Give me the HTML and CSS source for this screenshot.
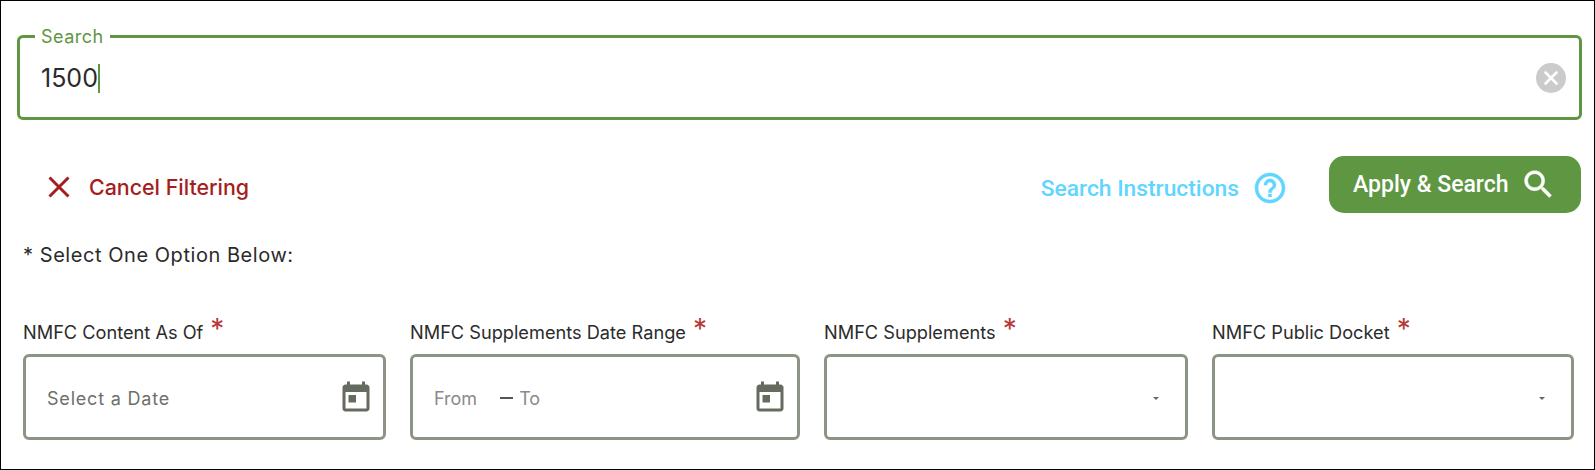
FILE: index.html
```html
<!DOCTYPE html>
<html lang="en">

<head>
    <meta charset="UTF-8">
    <meta name="viewport" content="width=device-width, initial-scale=1.0">
    <title>NMFC Search</title>
    <link rel="stylesheet" href="styles.css">
</head>

<body>
    <div class="frame">
        <fieldset class="search-box">
            <legend>Search</legend>
            <div class="search-value"><span>1500</span><span class="caret"></span></div>
            <button class="clear-btn" aria-label="Clear">
                <svg viewBox="0 0 30 30" width="30" height="30">
                    <circle cx="15" cy="15" r="15" fill="#cbcbcb" />
                    <path d="M9.5 9.5l11 11M20.5 9.5l-11 11" stroke="#fff" stroke-width="2.6" stroke-linecap="round" />
                </svg>
            </button>
        </fieldset>

        <div class="actions">
            <a class="cancel" href="#">
                <svg viewBox="0 0 22 22" width="22" height="22">
                    <path d="M1.5 1.5l19 19M20.5 1.5l-19 19" stroke="#a51d1d" stroke-width="3" />
                </svg>
                <span>Cancel Filtering</span>
            </a>
            <a class="instructions" href="#">
                <span>Search Instructions</span>
                <svg viewBox="0 0 24 24" width="36" height="36">
                    <path fill="#5fd5ff" stroke="#5fd5ff" stroke-width="0.35" d="M11 18h2v-2h-2v2zm1-16C6.48 2 2 6.48 2 12s4.48 10 10 10 10-4.48 10-10S17.52 2 12 2zm0 18c-4.41 0-8-3.59-8-8s3.59-8 8-8 8 3.59 8 8-3.59 8-8 8zm0-14c-2.21 0-4 1.79-4 4h2c0-1.1.9-2 2-2s2 .9 2 2c0 2-3 1.75-3 5h2c0-2.25 3-2.5 3-5 0-2.21-1.79-4-4-4z" />
                </svg>
            </a>
            <button class="apply">
                <span>Apply &amp; Search</span>
                <svg viewBox="0 0 24 24" width="37" height="37">
                    <path fill="#fff" stroke="#fff" stroke-width="0.3" d="M15.5 14h-.79l-.28-.27C15.41 12.59 16 11.11 16 9.5 16 5.91 13.09 3 9.5 3S3 5.91 3 9.5 5.91 16 9.5 16c1.61 0 3.09-.59 4.23-1.57l.27.28v.79l5 4.99L20.49 19l-4.99-5zm-6 0C7.01 14 5 11.99 5 9.5S7.01 5 9.5 5 14 7.01 14 9.5 11.99 14 9.5 14z" />
                </svg>
            </button>
        </div>

        <p class="prompt">* Select One Option Below:</p>

        <div class="fields">
            <div class="field">
                <label>NMFC Content As Of <span class="req">*</span></label>
                <div class="control">
                    <span class="placeholder">Select a Date</span>
                    <svg class="cal" viewBox="0 0 24 24" width="36" height="36">
                        <path d="M19 3h-1V1h-2v2H8V1H6v2H5c-1.11 0-1.99.9-1.99 2L3 19c0 1.1.89 2 2 2h14c1.1 0 2-.9 2-2V5c0-1.1-.9-2-2-2zm0 16H5V8h14v11zM7 10h5v5H7z" />
                    </svg>
                </div>
            </div>
            <div class="field">
                <label>NMFC Supplements Date Range <span class="req">*</span></label>
                <div class="control">
                    <span class="range-from">From</span>
                    <span class="range-dash"></span>
                    <span class="range-to">To</span>
                    <svg class="cal" viewBox="0 0 24 24" width="36" height="36">
                        <path d="M19 3h-1V1h-2v2H8V1H6v2H5c-1.11 0-1.99.9-1.99 2L3 19c0 1.1.89 2 2 2h14c1.1 0 2-.9 2-2V5c0-1.1-.9-2-2-2zm0 16H5V8h14v11zM7 10h5v5H7z" />
                    </svg>
                </div>
            </div>
            <div class="field">
                <label>NMFC Supplements <span class="req">*</span></label>
                <div class="control select">
                    <span class="arrow"></span>
                </div>
            </div>
            <div class="field">
                <label>NMFC Public Docket <span class="req">*</span></label>
                <div class="control select">
                    <span class="arrow"></span>
                </div>
            </div>
        </div>
    </div>
</body>

</html>
```

FILE: styles.css
```css
* {
    box-sizing: border-box;
}

body {
    margin: 0;
    background-color: #fff;
    color: #2b2b2b;
    font-family: Inter, "Liberation Sans", sans-serif;
}

a {
    text-decoration: none;
}

.frame {
    width: 1595px;
    height: 470px;
    padding: 25px 12px 0 16px;
    border: 1px solid #000;
}

.search-box {
    display: flex;
    align-items: center;
    justify-content: space-between;
    height: 94px;
    margin: 0;
    padding: 0 13px 7px 21px;
    border: 3px solid #5e9642;
    border-radius: 6px;
}

.search-box legend {
    margin-left: -6px;
    padding: 2px 6px 0;
    color: #5e9642;
    font-size: 18px;
    line-height: 18px;
    letter-spacing: 0.5px;
}

.search-value {
    display: flex;
    align-items: center;
    font-size: 25px;
    line-height: 29px;
}

.caret {
    width: 2px;
    height: 29px;
    background-color: #5e9642;
}

.clear-btn {
    display: flex;
    padding: 0;
    border: none;
    background: none;
}

.actions {
    display: flex;
    align-items: center;
    height: 57px;
    margin-top: 36px;
}

.cancel {
    display: flex;
    align-items: center;
    gap: 19px;
    margin: 5px 0 0 31px;
    color: #a51d1d;
    font-size: 21.4px;
    font-weight: 500;
}

.instructions {
    display: flex;
    align-items: center;
    gap: 13px;
    margin: 7px 0 0 auto;
    color: #5fd5ff;
    font-family: Roboto, sans-serif;
    font-size: 22.8px;
    font-weight: 500;
}

.apply {
    display: flex;
    align-items: center;
    justify-content: space-between;
    width: 252px;
    height: 57px;
    margin: 0 1px 0 41px;
    padding: 0 24px;
    border: none;
    border-radius: 15px;
    background-color: #5e9642;
    color: #fff;
    font-family: Roboto, sans-serif;
    font-size: 23px;
    font-weight: 500;
}

.prompt {
    margin: 27px 0 0 6px;
    font-size: 20px;
    line-height: 30px;
    letter-spacing: 0.55px;
}

.fields {
    display: grid;
    grid-template-columns: 363px 390px 364px 362px;
    gap: 24px;
    margin: 51px 0 0 6px;
}

.field label {
    display: flex;
    align-items: baseline;
    gap: 7px;
    height: 30px;
    margin-bottom: 3px;
    font-size: 18.2px;
    line-height: 22px;
}

.req {
    color: #b53a3a;
    font-size: 28px;
    line-height: 14px;
}

.control {
    display: flex;
    align-items: center;
    height: 86px;
    padding: 2px 9px 0 21px;
    border: 3px solid #8c9486;
    border-radius: 6px;
}

.placeholder {
    color: #6c706a;
    font-size: 18px;
    letter-spacing: 0.8px;
}

.range-from,
.range-to {
    color: #8a8a8a;
    font-size: 18px;
}

.range-dash {
    width: 13px;
    height: 2px;
    margin: 0 6px 0 23px;
    background-color: #555;
}

.cal {
    margin-left: auto;
    fill: #666b5f;
}

.arrow {
    margin-left: auto;
    margin-right: 17px;
    border-top: 3px solid #666;
    border-left: 3px solid transparent;
    border-right: 3px solid transparent;
}
```
